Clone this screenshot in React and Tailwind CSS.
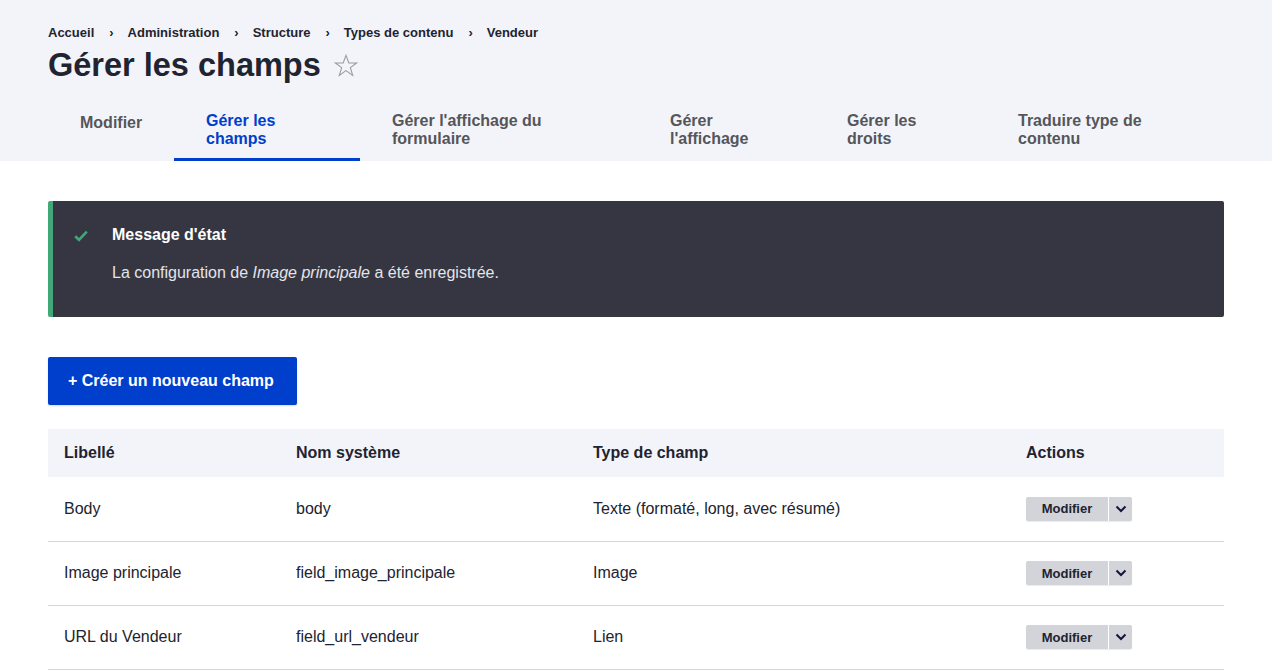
import React from "react";

const tabs = [
  { label: "Modifier", w: "w-[126px]", active: false, single: true },
  { label: "Gérer les champs", w: "w-[186px]", active: true },
  { label: "Gérer l'affichage du formulaire", w: "w-[278px]" },
  { label: "Gérer l'affichage", w: "w-[177px]" },
  { label: "Gérer les droits", w: "w-[171px]" },
  { label: "Traduire type de contenu", w: "w-[238px]" },
];

const crumbs = ["Accueil", "Administration", "Structure", "Types de contenu", "Vendeur"];

const fields = [
  { label: "Body", machine: "body", type: "Texte (formaté, long, avec résumé)" },
  { label: "Image principale", machine: "field_image_principale", type: "Image" },
  { label: "URL du Vendeur", machine: "field_url_vendeur", type: "Lien" },
];

const ActionButton = () => (
  <div className="inline-flex h-6 rounded-[2px] bg-[#d3d4d9] shadow-[0_1px_1px_rgba(0,0,0,0.08)] align-middle">
    <button className="w-[82px] text-[13px] font-bold text-[#222330]">Modifier</button>
    <div className="w-px bg-white" />
    <button className="flex w-[23px] items-center justify-center">
      <svg width="12" height="8" viewBox="0 0 12 8" fill="none">
        <path d="M1.5 1.5 6 6l4.5-4.5" stroke="#14143a" strokeWidth="2" />
      </svg>
    </button>
  </div>
);

const App = () => {
  return (
    <div className="min-h-[670px] bg-white font-['Liberation_Sans',Arial,sans-serif] text-[#222330]">
      <div className="bg-[#f3f4f9] px-12">
        <nav className="flex items-center pt-[25px] text-[13px] font-bold leading-[16px]">
          {crumbs.map((c, i) => (
            <React.Fragment key={c}>
              {i > 0 && <span className="pl-[15px] pr-[14px] text-[13px]">›</span>}
              <span>{c}</span>
            </React.Fragment>
          ))}
        </nav>
        <div className="mt-[4px] flex items-center">
          <h1 className="text-[32.5px] font-bold leading-[40px]">Gérer les champs</h1>
          <svg className="ml-[12px] mt-[1px]" width="26" height="26" viewBox="0 0 24 24" fill="none">
            <path
              d="M12 2.2 14.6 9.2h7.2l-5.8 4.3 2.2 7.2L12 16.3l-6.2 4.4 2.2-7.2-5.8-4.3h7.2Z"
              stroke="#9a9aa2"
              strokeWidth="1"
              strokeLinejoin="miter"
            />
          </svg>
        </div>
        <div className="mt-[27px] flex">
          {tabs.map((t) => (
            <div
              key={t.label}
              className={`${t.w} px-8 pb-[10px] border-b-[3px] text-[16px] font-bold leading-[18px] ${
                t.active ? "border-[#003ecc] text-[#003ecc]" : "border-transparent text-[#55565b]"
              }`}
            >
              <span className={`block ${t.single ? "mt-[2px]" : ""}`}>{t.label}</span>
            </div>
          ))}
        </div>
      </div>

      <div className="px-12 pt-10">
        <div className="flex h-[116px] rounded-[2px] border-l-[5px] border-[#42a877] bg-[#353641] pl-5 pt-[22px]">
          <svg className="mt-[7px] ml-[1px]" width="14" height="12" viewBox="0 0 14 12" fill="none">
            <path d="M1.2 6.2 5 9.8 12.8 1.6" stroke="#42a877" strokeWidth="2.6" />
          </svg>
          <div className="ml-[24px]">
            <div className="text-[16px] font-bold leading-[24px] text-white">Message d'état</div>
            <div className="mt-[14px] text-[16px] leading-[24px] text-[#e4e4ea]">
              La configuration de <em>Image principale</em> a été enregistrée.
            </div>
          </div>
        </div>

        <button className="mt-10 h-12 w-[249px] rounded-[2px] bg-[#003ecc] text-left pl-5 text-[16px] font-bold text-white shadow-[0_1px_2px_rgba(0,0,0,0.15)]">
          + Créer un nouveau champ
        </button>

        <table className="mt-6 w-full border-collapse text-[16px]">
          <thead>
            <tr className="h-12 bg-[#f3f4f9] text-left">
              <th className="w-[232px] px-4 font-bold">Libellé</th>
              <th className="w-[297px] px-4 font-bold">Nom système</th>
              <th className="w-[433px] px-4 font-bold">Type de champ</th>
              <th className="px-4 font-bold">Actions</th>
            </tr>
          </thead>
          <tbody>
            {fields.map((f) => (
              <tr key={f.machine} className="h-16 border-b border-[#d3d4d9]">
                <td className="px-4">{f.label}</td>
                <td className="px-4">{f.machine}</td>
                <td className="px-4">{f.type}</td>
                <td className="px-4">
                  <ActionButton />
                </td>
              </tr>
            ))}
          </tbody>
        </table>
      </div>
    </div>
  );
};

export default App;
